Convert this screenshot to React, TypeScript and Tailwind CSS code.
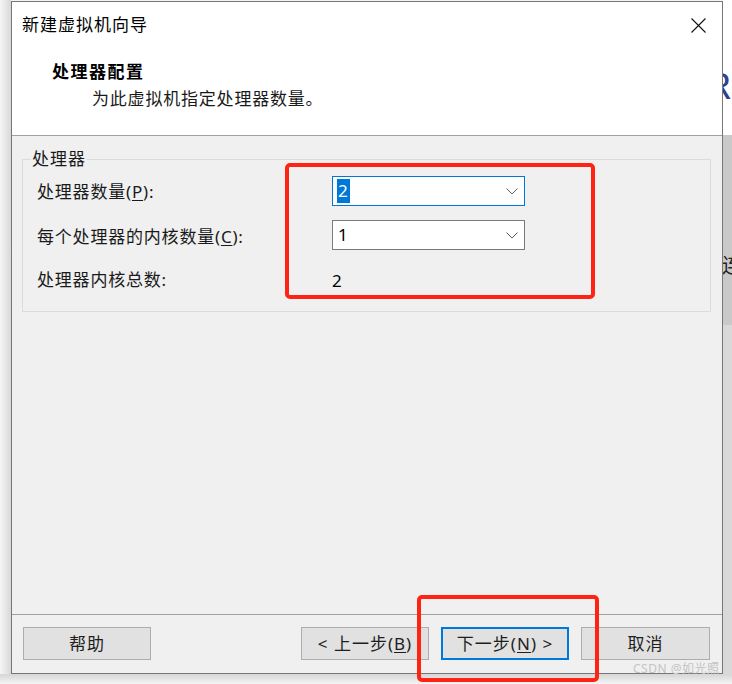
import React from 'react';

const ui = "font-['Noto_Sans','Noto_Sans_CJK_SC',sans-serif]";

const Chevron: React.FC = () => (
  <svg width="12" height="7" viewBox="0 0 12 7" fill="none">
    <path d="M0.5 0.5 L6 6 L11.5 0.5" stroke="#5f5f5f" strokeWidth="1" />
  </svg>
);

interface ComboProps {
  value: string;
  focused?: boolean;
}

const Combo: React.FC<ComboProps> = ({ value, focused }) => (
  <div
    className={`w-[193px] h-[30px] bg-white flex items-center justify-between pl-[4px] pr-[6px] border ${
      focused ? 'border-[#0078d7]' : 'border-[#7a7a7a]'
    }`}
  >
    {focused ? (
      <span className="bg-[#0078d7] text-white text-[17px] leading-[24px] px-[1px]">{value}</span>
    ) : (
      <span className="text-[#000] text-[17px] leading-[24px] pl-[1px]">{value}</span>
    )}
    <Chevron />
  </div>
);

interface BtnProps {
  children: React.ReactNode;
  width: string;
  primary?: boolean;
}

const Btn: React.FC<BtnProps> = ({ children, width, primary }) => (
  <div
    className={`${width} h-[33px] bg-[#e1e1e1] flex items-center justify-center text-[17px] tracking-[1px] text-[#1e1e1e] ${
      primary ? 'border-2 border-[#0078d7]' : 'border border-[#adadad]'
    }`}
  >
    {children}
  </div>
);

export default function App() {
  return (
    <div className={`w-[732px] h-[684px] relative overflow-hidden flex flex-col bg-[#f4f4f4] ${ui}`}>
      <div className="flex h-[674px]">
        {/* shadow left of the dialog */}
        <div className="w-[11px] h-full bg-linear-to-r from-[#f6f6f6] to-[#d8d8d8]" />

        {/* dialog */}
        <div className="w-[712px] h-[673px] mt-[1px] border border-[#777777] flex flex-col bg-[#f0f0f0]">
          <div className="h-[134px] bg-white border-b border-[#a0a0a0] pt-[11px]">
            <div className="flex items-center justify-between pl-[10px] pr-[16px]">
              <span className="text-[17px] leading-[24px] tracking-[1px] text-[#000]">新建虚拟机向导</span>
              <svg width="15" height="15" viewBox="0 0 15 15">
                <path d="M0.5 0.5 L14.5 14.5 M14.5 0.5 L0.5 14.5" stroke="#111" strokeWidth="1.1" />
              </svg>
            </div>
            <div className="mt-[23px] pl-[40px] text-[17px] leading-[24px] font-bold tracking-[1.5px] text-[#000]">
              处理器配置
            </div>
            <div className="mt-[3px] pl-[80px] text-[17px] leading-[24px] tracking-[0.8px] text-[#1a1a1a]">
              为此虚拟机指定处理器数量。
            </div>
          </div>

          <div className="flex-1 border-b border-[#a0a0a0] pt-[23px] pl-[10px] pr-[11px]">
            <div className="relative h-[153px] border border-[#dcdcdc] pt-[16px] pl-[14px]">
              <span className="absolute left-[8px] top-[-13px] px-[1px] bg-[#f0f0f0] text-[17px] leading-[24px] tracking-[1px] text-[#1a1a1a]">
                处理器
              </span>
              <div className="grid grid-cols-[295px_193px] auto-rows-[30px] gap-y-[14px] items-center text-[17px] tracking-[0.8px] text-[#1a1a1a]">
                <span className="pt-[2px]">
                  处理器数量(<span className="underline underline-offset-2">P</span>):
                </span>
                <Combo value="2" focused />
                <span className="pt-[4px]">
                  每个处理器的内核数量(<span className="underline underline-offset-2">C</span>):
                </span>
                <Combo value="1" />
                <span className="pt-[2px]">处理器内核总数:</span>
                <span className="pt-[3px] text-[#000]">2</span>
              </div>
            </div>
          </div>

          <div className="h-[58px] flex items-start pt-[12px] pl-[11px] pr-[12px]">
            <Btn width="w-[128px]">帮助</Btn>
            <div className="ml-auto flex gap-[12px]">
              <Btn width="w-[128px]">
                &lt; 上一步(<span className="underline underline-offset-2">B</span>)
              </Btn>
              <Btn width="w-[128px]" primary>
                下一步(<span className="underline underline-offset-2">N</span>) &gt;
              </Btn>
              <Btn width="w-[129px]">取消</Btn>
            </div>
          </div>
        </div>

        {/* window behind, on the right */}
        <div className="w-[9px] h-full flex flex-col overflow-hidden">
          <div className="h-[135px] bg-white pt-[64px] overflow-hidden">
            <div className="-ml-[15px] text-[37px] leading-[42px] text-[#2d3f8e] whitespace-nowrap">R</div>
          </div>
          <div className="h-[190px] bg-[#c9c9c9] pt-[118px] overflow-hidden">
            <div className="-ml-[1px] text-[20px] leading-[26px] text-[#222] whitespace-nowrap">连</div>
          </div>
          <div className="flex-1 bg-[#d9d9d9]" />
        </div>
      </div>
      <div className="flex-1 bg-linear-to-b from-[#d6d6d6] to-[#f4f4f4]" />

      {/* annotations */}
      <div className="absolute left-[285px] top-[163px] w-[310px] h-[136px] border-4 border-[#ff2314] rounded-[5px]" />
      <div className="absolute left-[417px] top-[595px] w-[182px] h-[87px] border-4 border-[#ff2314] rounded-[5px]" />
      <span className="absolute left-[633px] top-[661px] text-[12px] leading-[16px] text-[#c4c4c4] tracking-[0.5px]">
        CSDN @如光照
      </span>
    </div>
  );
}
